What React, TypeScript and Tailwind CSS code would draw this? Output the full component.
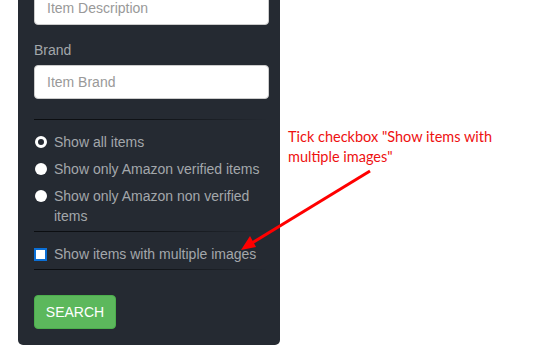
import React from "react";

const Sep = () => (
  <div className="h-px w-full bg-gradient-to-r from-[#0b0d10] via-[#101317] to-[#252a32]" />
);

export default function App() {
  return (
    <div className="relative w-[541px] h-[352px] bg-white overflow-hidden" style={{ fontFamily: '"Liberation Sans", Arial, sans-serif' }}>
      <div className="ml-[18px] w-[262px] bg-[#252a32] rounded-b-[5px] pl-4 pr-[11px] pb-4 flex flex-col text-[14px] leading-5">
        <div className="mt-[-9px] h-[34px] bg-white rounded border border-[#cccccc] flex items-center pl-3 text-[#999999]">
          Item Description
        </div>
        <div className="mt-[15px] text-[#a3a7ab]">Brand</div>
        <div className="mt-[5px] h-[34px] bg-white rounded border border-[#cccccc] flex items-center pl-3 text-[#999999]">
          Item Brand
        </div>
        <div className="mt-5">
          <Sep />
        </div>
        <div className="mt-3 flex flex-col gap-[7px] text-[#a3a7ab]">
          <div className="flex items-start">
            <span className="mt-1 ml-px w-3 h-3 rounded-full border-[3px] border-white bg-[#252a32] shrink-0" />
            <span className="ml-[7px]">Show all items</span>
          </div>
          <div className="flex items-start">
            <span className="mt-1 ml-px w-3 h-3 rounded-full bg-white shrink-0" />
            <span className="ml-[7px]">Show only Amazon verified items</span>
          </div>
          <div className="flex items-start">
            <span className="mt-1 ml-px w-3 h-3 rounded-full bg-white shrink-0" />
            <span className="ml-[7px]">Show only Amazon non verified<br />items</span>
          </div>
        </div>
        <div className="mt-[5px]">
          <Sep />
        </div>
        <div className="mt-3 flex items-center text-[#a3a7ab]">
          <span className="w-[13px] h-[13px] bg-white border-2 border-[#0b6fd6] shrink-0" />
          <span className="ml-[7px]">Show items with multiple images</span>
        </div>
        <div className="mt-[5px]">
          <Sep />
        </div>
        <button className="mt-[25px] self-start w-[82px] h-[34px] bg-[#5cb85c] rounded-[4px] text-white text-[14px] border border-[#4cae4c]">
          SEARCH
        </button>
      </div>
      <div className="absolute left-[288px] top-[127px] text-[#ee1111] text-[14.5px] leading-[20px]" style={{ fontFamily: 'Lato, "Open Sans", sans-serif' }}>
        Tick checkbox "Show items with<br />multiple images"
      </div>
      <svg className="absolute left-0 top-0" width="541" height="352">
        <line x1="370" y1="171" x2="252" y2="243" stroke="#ff0000" strokeWidth="3" />
        <polygon points="241,250 250,236 256,247" fill="#ff0000" />
      </svg>
    </div>
  );
}
